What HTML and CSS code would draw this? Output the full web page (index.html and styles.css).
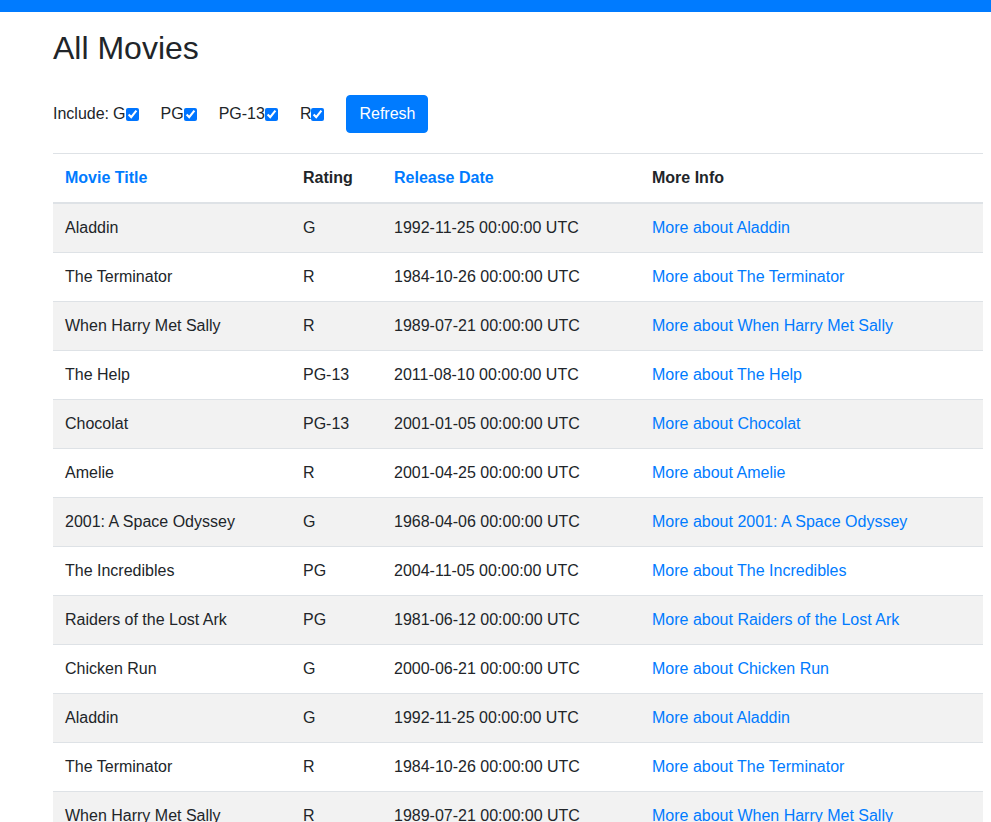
FILE: index.html
```html
<!DOCTYPE html>
<html>
<head>
<meta charset="utf-8">
<title>All Movies</title>
<link rel="stylesheet" href="styles.css">
</head>
<body>
<div class="topbar"></div>
<main class="container">
  <h2 class="title">All Movies</h2>
  <form class="filters">
    <span class="include">Include:</span>
    <label class="opt opt-first">G<input type="checkbox" checked></label>
    <label class="opt">PG<input type="checkbox" checked></label>
    <label class="opt">PG-13<input type="checkbox" checked></label>
    <label class="opt">R<input type="checkbox" checked></label>
    <button type="button" class="btn">Refresh</button>
  </form>
  <table class="movies">
    <colgroup>
      <col class="c1"><col class="c2"><col class="c3"><col class="c4">
    </colgroup>
    <thead>
      <tr><th><a href="#">Movie Title</a></th><th>Rating</th><th><a href="#">Release Date</a></th><th>More Info</th></tr>
    </thead>
    <tbody>
      <tr><td>Aladdin</td><td>G</td><td>1992-11-25 00:00:00 UTC</td><td><a href="#">More about Aladdin</a></td></tr>
      <tr><td>The Terminator</td><td>R</td><td>1984-10-26 00:00:00 UTC</td><td><a href="#">More about The Terminator</a></td></tr>
      <tr><td>When Harry Met Sally</td><td>R</td><td>1989-07-21 00:00:00 UTC</td><td><a href="#">More about When Harry Met Sally</a></td></tr>
      <tr><td>The Help</td><td>PG-13</td><td>2011-08-10 00:00:00 UTC</td><td><a href="#">More about The Help</a></td></tr>
      <tr><td>Chocolat</td><td>PG-13</td><td>2001-01-05 00:00:00 UTC</td><td><a href="#">More about Chocolat</a></td></tr>
      <tr><td>Amelie</td><td>R</td><td>2001-04-25 00:00:00 UTC</td><td><a href="#">More about Amelie</a></td></tr>
      <tr><td>2001: A Space Odyssey</td><td>G</td><td>1968-04-06 00:00:00 UTC</td><td><a href="#">More about 2001: A Space Odyssey</a></td></tr>
      <tr><td>The Incredibles</td><td>PG</td><td>2004-11-05 00:00:00 UTC</td><td><a href="#">More about The Incredibles</a></td></tr>
      <tr><td>Raiders of the Lost Ark</td><td>PG</td><td>1981-06-12 00:00:00 UTC</td><td><a href="#">More about Raiders of the Lost Ark</a></td></tr>
      <tr><td>Chicken Run</td><td>G</td><td>2000-06-21 00:00:00 UTC</td><td><a href="#">More about Chicken Run</a></td></tr>
      <tr><td>Aladdin</td><td>G</td><td>1992-11-25 00:00:00 UTC</td><td><a href="#">More about Aladdin</a></td></tr>
      <tr><td>The Terminator</td><td>R</td><td>1984-10-26 00:00:00 UTC</td><td><a href="#">More about The Terminator</a></td></tr>
      <tr><td>When Harry Met Sally</td><td>R</td><td>1989-07-21 00:00:00 UTC</td><td><a href="#">More about When Harry Met Sally</a></td></tr>
      <tr><td>The Help</td><td>PG-13</td><td>2011-08-10 00:00:00 UTC</td><td><a href="#">More about The Help</a></td></tr>
    </tbody>
  </table>
</main>
</body>
</html>
```

FILE: styles.css
```css
html { overflow: hidden; }
body {
  margin: 0;
  font-family: "Liberation Sans", Arial, sans-serif;
  font-size: 16px;
  line-height: 1.5;
  color: #212529;
  background: #fff;
}
a { color: #007bff; text-decoration: none; }
.topbar { height: 12px; background: #007bff; }
.container { padding-left: 53px; }
.title {
  margin: 17px 0 0;
  font-size: 32px;
  font-weight: 400;
  line-height: 1.2;
}
.filters {
  display: flex;
  align-items: center;
  margin-top: 28px;
  height: 38px;
}
.include { margin-right: 4px; }
.opt { display: inline-flex; align-items: center; margin-left: 22px; }
.opt-first { margin-left: 0; }
.opt input {
  margin: 0;
  width: 13px;
  height: 13px;
}
.btn {
  margin-left: 22px;
  font: inherit;
  line-height: 1.5;
  color: #fff;
  background: #007bff;
  border: 1px solid #007bff;
  border-radius: 4px;
  padding: 6px 12px;
}
.movies {
  margin-top: 20px;
  width: 930px;
  table-layout: fixed;
  border-collapse: collapse;
}
.c1 { width: 238px; }
.c2 { width: 91px; }
.c3 { width: 258px; }
.c4 { width: 343px; }
.movies th, .movies td {
  padding: 12px;
  text-align: left;
  vertical-align: top;
  border-top: 1px solid #dee2e6;
  white-space: nowrap;
}
.movies th { font-weight: 700; border-bottom: 2px solid #dee2e6; }
.movies tbody tr:nth-child(odd) { background: #f2f2f2; }
.movies tbody tr:first-child td { border-top: 0; }
```
